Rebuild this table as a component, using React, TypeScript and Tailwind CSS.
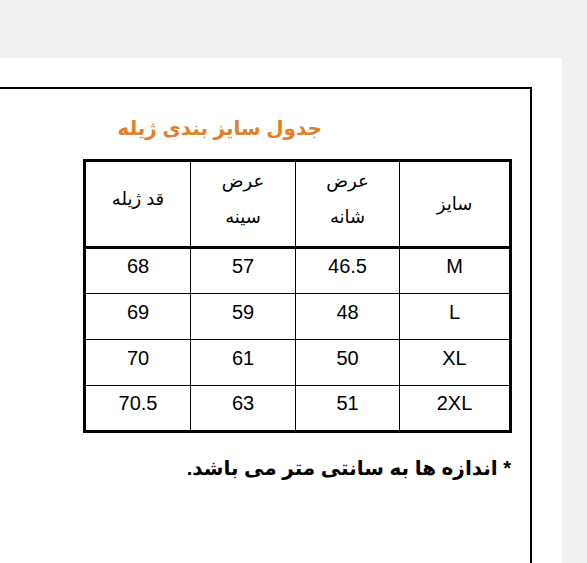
import React from "react";

const rows = [
  ["M", "46.5", "57", "68"],
  ["L", "48", "59", "69"],
  ["XL", "50", "61", "70"],
  ["2XL", "51", "63", "70.5"],
];

export default function App() {
  const font = { fontFamily: '"Liberation Sans", "DejaVu Sans", sans-serif' };
  return (
    <div className="h-[563px] w-[587px] bg-[#f0f1f3] flex flex-col pt-[58px] overflow-hidden" style={font}>
      <div className="w-[562px] flex-1 bg-white pt-[29px] flex flex-col">
        <div dir="rtl" className="w-[532px] flex-1 border-t-2 border-r-2 border-black flex flex-col">
          <div className="pr-[208px] pt-[24px] h-[70px] text-[20px] font-bold text-[#e0802a] leading-[30px]">
            جدول سایز بندی ژیله
          </div>
          <table className="mr-[18px] w-[426px] border-collapse border-[3px] border-black text-black table-fixed">
            <colgroup>
              <col className="w-[111px]" />
              <col className="w-[104px]" />
              <col className="w-[105px]" />
              <col className="w-[106px]" />
            </colgroup>
            <thead>
              <tr className="h-[87px] border-b-[3px] border-black text-[18px]">
                <th className="border border-black font-normal">سایز</th>
                <th className="border border-black font-normal leading-[36px] pb-[10px]">عرض<br />شانه</th>
                <th className="border border-black font-normal leading-[36px] pb-[10px]">عرض<br />سینه</th>
                <th className="border border-black font-normal pb-[10px]">قد ژیله</th>
              </tr>
            </thead>
            <tbody>
              {rows.map((r) => (
                <tr key={r[0]} className="h-[46px] text-[20px]">
                  {r.map((c, i) => (
                    <td key={i} className="border border-black text-center pb-[10px]">{c}</td>
                  ))}
                </tr>
              ))}
            </tbody>
          </table>
          <div className="pr-[19px] pt-[21px] text-[20px] font-bold text-black leading-[28px]">
            * اندازه ها به سانتی متر می باشد.
          </div>
        </div>
      </div>
    </div>
  );
}
